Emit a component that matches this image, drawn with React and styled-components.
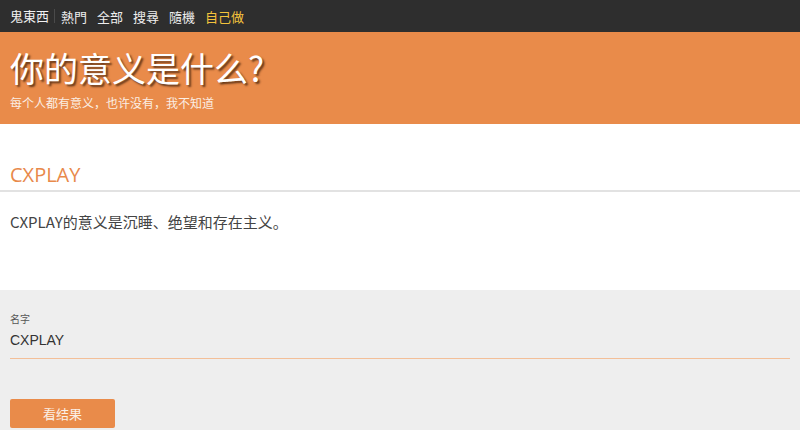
import React from 'react'
import styled, { createGlobalStyle } from 'styled-components'

const GlobalStyle = createGlobalStyle`
    html, body {
        margin: 0;
        padding: 0;
        background: #fff;
        font-family: "Noto Sans CJK SC", "Noto Sans", sans-serif;
    }
`

const links = [
    { label: '熱門' },
    { label: '全部' },
    { label: '搜尋' },
    { label: '隨機' },
    { label: '自己做', active: true },
]

const App = () => {
    return (
        <Page>
            <GlobalStyle />
            <NavBar>
                <Brand href="#">鬼東西</Brand>
                {links.map((link) => (
                    <NavLink key={link.label} href="#" $active={link.active}>{link.label}</NavLink>
                ))}
            </NavBar>

            <Hero>
                <HeroTitle>你的意义是什么?</HeroTitle>
                <HeroSub>每个人都有意义，也许没有，我不知道</HeroSub>
            </Hero>

            <Result>
                <ResultName>CXPLAY</ResultName>
                <ResultText>CXPLAY的意义是沉睡、绝望和存在主义。</ResultText>
            </Result>

            <Form>
                <Field>
                    <Label>名字</Label>
                    <Input defaultValue="CXPLAY" />
                </Field>
                <Submit>看结果</Submit>
            </Form>
        </Page>
    )
}

export default App

const Page = styled.div`
    width: 800px;
    min-height: 438px;
`

const NavBar = styled.nav`
    display: flex;
    align-items: center;
    height: 32px;
    padding: 0 10px;
    background: #2e2e2e;
    font-size: 13px;
`

const Brand = styled.a`
    color: #f2f2f2;
    text-decoration: none;
    padding-right: 5px;
    margin-right: 6px;
    border-right: 1px solid #4a4a4a;
    line-height: 14px;
`

const NavLink = styled.a`
    color: ${(p) => (p.$active ? '#f3c23c' : '#eeeeee')};
    text-decoration: none;
    margin-right: 10px;
`

const Hero = styled.header`
    background: #e98b4a;
    height: 92px;
    padding: 0 10px;
    box-sizing: border-box;
    color: #fff;
    overflow: hidden;
`

const HeroTitle = styled.h1`
    margin: 0;
    padding-top: 16px;
    font-size: 34px;
    font-weight: 400;
    line-height: 40px;
    text-shadow: 2px 2px 2px rgba(60, 30, 10, 0.75);
`

const HeroSub = styled.p`
    margin: 7px 0 0;
    font-size: 12px;
    line-height: 16px;
    color: #fbeee4;
`

const Result = styled.section`
    height: 166px;
    padding-top: 38px;
    box-sizing: border-box;
`

const ResultName = styled.h2`
    margin: 0;
    padding: 0 10px 2px;
    font-family: "Open Sans", "Noto Sans", sans-serif;
    font-size: 20px;
    font-weight: 400;
    line-height: 26px;
    color: #e8894b;
    border-bottom: 2px solid #e2e2e2;
`

const ResultText = styled.p`
    margin: 19px 10px 0;
    font-size: 15px;
    line-height: 22px;
    color: #444;
`

const Form = styled.form`
    background: #eeeeee;
    height: 140px;
    padding: 22px 10px 0;
    box-sizing: border-box;
`

const Field = styled.div`
    display: flex;
    flex-direction: column;
`

const Label = styled.label`
    font-size: 10px;
    line-height: 14px;
    color: #555;
`

const Input = styled.input`
    border: none;
    border-bottom: 1px solid #f3bf98;
    background: transparent;
    padding: 6px 0 10px;
    font-family: "Liberation Sans", Arial, sans-serif;
    font-size: 14px;
    color: #333;
    outline: none;
    width: 780px;
`

const Submit = styled.button`
    margin-top: 40px;
    width: 105px;
    height: 29px;
    border: none;
    border-radius: 2px;
    background: #e98b4a;
    color: #fbefe6;
    font-family: "Noto Sans CJK SC", sans-serif;
    font-size: 13px;
    cursor: pointer;
`
